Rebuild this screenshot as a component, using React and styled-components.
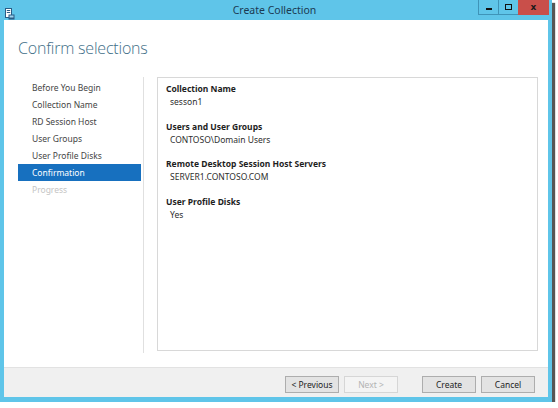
import React from "react";
import styled, { createGlobalStyle } from "styled-components";

const GlobalStyle = createGlobalStyle`
  html, body {
    margin: 0;
    padding: 0;
    background: #ffffff;
  }
  body {
    font-family: "Noto Sans", "Open Sans", sans-serif;
  }
`;

const steps = [
  { name: "Before You Begin" },
  { name: "Collection Name" },
  { name: "RD Session Host" },
  { name: "User Groups" },
  { name: "User Profile Disks" },
  { name: "Confirmation", active: true },
  { name: "Progress", disabled: true },
];

const details = [
  { label: "Collection Name", value: "sesson1" },
  { label: "Users and User Groups", value: "CONTOSO\\Domain Users" },
  { label: "Remote Desktop Session Host Servers", value: "SERVER1.CONTOSO.COM" },
  { label: "User Profile Disks", value: "Yes" },
];

const AppIcon = () => (
  <svg width="10" height="12" viewBox="0 0 10 12">
    <rect x="0.5" y="0.5" width="6" height="9" fill="#ffffff" stroke="#2a5d86" />
    <rect x="1.8" y="2" width="3.4" height="1" fill="#2a5d86" />
    <rect x="1.8" y="4" width="3.4" height="1" fill="#2a5d86" />
    <rect x="3.5" y="6.5" width="6" height="5" fill="#2a5d86" />
    <rect x="4.5" y="7.5" width="4" height="2" fill="#9fd3ee" />
  </svg>
);

const App = () => {
  return (
    <>
      <GlobalStyle />
      <Window>
        <TitleBar>
          <IconSlot>
            <AppIcon />
          </IconSlot>
          <Title>Create Collection</Title>
          <Controls>
            <ControlButton>
              <MinGlyph />
            </ControlButton>
            <ControlButton>
              <MaxGlyph />
            </ControlButton>
            <CloseButton>x</CloseButton>
          </Controls>
        </TitleBar>
        <Client>
          <Header>
            <Heading>Confirm selections</Heading>
          </Header>
          <Body>
            <Nav>
              {steps.map((step) => (
                <NavItem key={step.name} $active={step.active} $disabled={step.disabled}>
                  {step.name}
                </NavItem>
              ))}
            </Nav>
            <Separator />
            <Panel>
              {details.map((d) => (
                <Group key={d.label}>
                  <Label>{d.label}</Label>
                  <Value>{d.value}</Value>
                </Group>
              ))}
            </Panel>
          </Body>
          <Footer>
            <Button>&lt; Previous</Button>
            <Button disabled>Next &gt;</Button>
            <Button $gap>Create</Button>
            <Button>Cancel</Button>
          </Footer>
        </Client>
      </Window>
    </>
  );
};

export default App;

const Window = styled.div`
  width: 552px;
  height: 402px;
  background: #5fc5e9;
  display: flex;
  flex-direction: column;
  box-shadow: 3px 3px 1px rgba(30, 30, 30, 0.75);
`;

const TitleBar = styled.div`
  height: 20px;
  display: flex;
  align-items: flex-start;
`;

const IconSlot = styled.div`
  width: 10px;
  padding: 3px 0 0 5px;
`;

const Title = styled.div`
  flex: 1;
  text-align: center;
  font-size: 10.5px;
  line-height: 20px;
  color: #1b3a52;
  padding-left: 56px;
`;

const Controls = styled.div`
  display: flex;
  height: 15px;
  margin-right: 3px;
`;

const ControlButton = styled.div`
  width: 19px;
  height: 14px;
  border: 1px solid #3f94b8;
  border-top: none;
  border-right: none;
  display: flex;
  align-items: center;
  justify-content: center;
`;

const MinGlyph = styled.span`
  width: 6px;
  height: 2px;
  background: #111;
  margin-top: 3px;
`;

const MaxGlyph = styled.span`
  width: 5px;
  height: 4px;
  border: 1.5px solid #111;
`;

const CloseButton = styled.div`
  width: 31px;
  height: 15px;
  background: #c94f4a;
  color: #1a1a1a;
  font-family: "DejaVu Sans", sans-serif;
  font-weight: bold;
  font-size: 9px;
  line-height: 14px;
  text-align: center;
`;

const Client = styled.div`
  flex: 1;
  margin: 0 4px 5px 4px;
  background: #ffffff;
  display: flex;
  flex-direction: column;
`;

const Header = styled.div`
  height: 57px;
  padding-left: 14px;
  display: flex;
  align-items: flex-start;
`;

const Heading = styled.h1`
  margin: 17px 0 0 0;
  font-size: 16px;
  font-weight: 300;
  color: #426f88;
  font-family: "Open Sans", "Noto Sans", sans-serif;
  letter-spacing: -0.2px;
`;

const Body = styled.div`
  display: flex;
  height: 276px;
  padding-left: 14px;
`;

const Nav = styled.div`
  width: 123px;
  padding-top: 2px;
  display: flex;
  flex-direction: column;
`;

const NavItem = styled.div`
  height: 17px;
  line-height: 17px;
  padding-left: 14px;
  font-size: 8.5px;
  color: ${(p) => (p.$active ? "#ffffff" : p.$disabled ? "#c4c4c4" : "#454545")};
  background: ${(p) => (p.$active ? "#1770bf" : "transparent")};
`;

const Separator = styled.div`
  width: 1px;
  margin-left: 2px;
  background: #e0e0e0;
`;

const Panel = styled.div`
  width: 371px;
  margin-left: 13px;
  margin-bottom: 2px;
  border: 1px solid #d8d8d8;
  padding: 4px 0 0 8px;
  display: flex;
  flex-direction: column;
  gap: 11.5px;
`;

const Group = styled.div`
  display: flex;
  flex-direction: column;
`;

const Label = styled.div`
  font-size: 8.5px;
  font-weight: bold;
  line-height: 13px;
  color: #1e1e1e;
`;

const Value = styled.div`
  font-size: 8.5px;
  line-height: 13px;
  padding-left: 4px;
  color: #2e2e2e;
`;

const Footer = styled.div`
  margin-top: auto;
  height: 30px;
  background: #f0f0f0;
  border-top: 1px solid #e2e2e2;
  display: flex;
  justify-content: flex-end;
  align-items: flex-start;
  padding: 8px 13px 0 0;
  box-sizing: border-box;
  gap: 5px;
`;

const Button = styled.button`
  width: 54px;
  height: 17px;
  padding: 0;
  margin-left: ${(p) => (p.$gap ? "19px" : "0")};
  background: #e3e3e3;
  border: 1px solid #adadad;
  font-family: "Noto Sans", sans-serif;
  font-size: 8.5px;
  color: #222;
  &:disabled {
    background: #f4f4f4;
    border-color: #d6d6d6;
    color: #b3b3b3;
  }
`;
